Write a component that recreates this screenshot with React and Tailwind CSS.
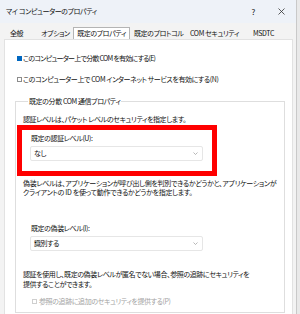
import React from 'react'

function Check({ checked, disabled }) {
  return (
    <span
      className={`inline-block w-[5px] h-[5px] shrink-0 border ${
        checked
          ? 'bg-[#0067c0] border-[#0067c0]'
          : disabled
          ? 'bg-white border-[#cfcfcf]'
          : 'bg-white border-[#8c8c8c]'
      }`}
    />
  )
}

function Select({ value }) {
  return (
    <div className="flex items-center justify-between h-[15px] w-[173px] pl-[3px] pr-[4px] bg-white border border-[#e6e6e6] rounded-[2px]">
      <span>{value}</span>
      <svg width="5" height="3" viewBox="0 0 5 3">
        <path d="M0.5 0.5 L2.5 2.5 L4.5 0.5" stroke="#9a9a9a" fill="none" strokeWidth="0.7" />
      </svg>
    </div>
  )
}

const tabs = [
  { label: '全般', w: 'w-[35px] pl-[4px]' },
  { label: 'オプション', w: 'w-[32px]' },
  { label: '既定のプロパティ', w: 'w-[57px] justify-center', active: true },
  { label: '既定のプロトコル', w: 'w-[60px] pl-[4px]' },
  { label: 'COM セキュリティ', w: 'w-[63px]' },
  { label: 'MSDTC', w: 'w-[30px]' },
]

export default function App() {
  return (
    <div className="w-[300px] h-[314px] overflow-hidden bg-[#e9e9e9] text-[7px] leading-[9px] tracking-[-0.4px] text-[#111] [font-family:'Noto_Sans_CJK_JP',sans-serif] [font-feature-settings:'palt']">
      <div className="w-[297px] h-full flex flex-col bg-[#f3f3f3] border-r border-[#c9c9c9]">
        {/* title bar */}
        <div className="h-[23px] shrink-0 flex items-center bg-[#eef2f8] pl-[6px] pr-[11px]">
          <span className="flex-1">マイ コンピューターのプロパティ</span>
          <span className="text-[8px] mr-[23px]">?</span>
          <svg width="7" height="7" viewBox="0 0 7 7">
            <path d="M0.5 0.5 L6.5 6.5 M6.5 0.5 L0.5 6.5" stroke="#333" strokeWidth="0.8" />
          </svg>
        </div>

        {/* tabs */}
        <div className="flex items-end pt-[4px] pl-[6px] h-[16px] shrink-0 whitespace-nowrap">
          {tabs.map((t) =>
            t.active ? (
              <div key={t.label} className={`h-[12px] flex items-center bg-white border border-b-0 border-[#b4b4b4] ${t.w}`}>
                {t.label}
              </div>
            ) : (
              <div key={t.label} className={`h-[12px] flex items-center ${t.w}`}>
                {t.label}
              </div>
            )
          )}
        </div>

        {/* panel */}
        <div className="flex-1 ml-[4px] mr-[3px] bg-white border border-[#e2e2e2] border-b-0 pl-[12px] pr-[7px] pt-[14px] whitespace-nowrap">
          <div className="flex items-center gap-[1px]">
            <Check checked />
            <span className="tracking-[-0.75px]">このコンピューター上で分散 COM を有効にする(E)</span>
          </div>
          <div className="flex items-center gap-[1px] mt-[12px]">
            <Check />
            <span>このコンピューター上で COM インターネット サービスを有効にする(N)</span>
          </div>

          <fieldset className="mt-[13px] -ml-[2px] border border-[#dedede] pl-[7px] pr-[6px] pb-[6px]">
            <legend className="ml-[5px] px-[1px]">既定の分散 COM 通信プロパティ</legend>
            <div className="mt-[9px]">認証レベルは、パケット レベルのセキュリティを指定します。</div>

            <div className="-ml-[6px] w-[200px] border-[5px] border-[#ff0000] pl-[8px] pt-[4px] pb-[10px] mt-[1px]">
              <div className="pl-[1px]">既定の認証レベル(U):</div>
              <div className="mt-[3px]">
                <Select value="なし" />
              </div>
            </div>

            <div className="mt-[3px] tracking-[-0.3px]">偽装レベルは、アプリケーションが呼び出し側を判別できるかどうかと、アプリケーションが</div>
            <div className="tracking-[-0.3px]">クライアントの ID を使って動作できるかどうかを指定します。</div>

            <div className="mt-[27px] pl-[8px]">既定の偽装レベル(I):</div>
            <div className="mt-[3px] pl-[7px]">
              <Select value="識別する" />
            </div>

            <div className="mt-[18px] leading-[10px]">
              認証を使用し、既定の偽装レベルが匿名でない場合、参照の追跡にセキュリティを
              <br />
              提供することができます。
            </div>

            <div className="flex items-center gap-[2px] mt-[8px] pl-[9px] text-[#a3a3a3]">
              <Check disabled />
              <span>参照の追跡に追加のセキュリティを提供する(P)</span>
            </div>
          </fieldset>
        </div>
      </div>
    </div>
  )
}
